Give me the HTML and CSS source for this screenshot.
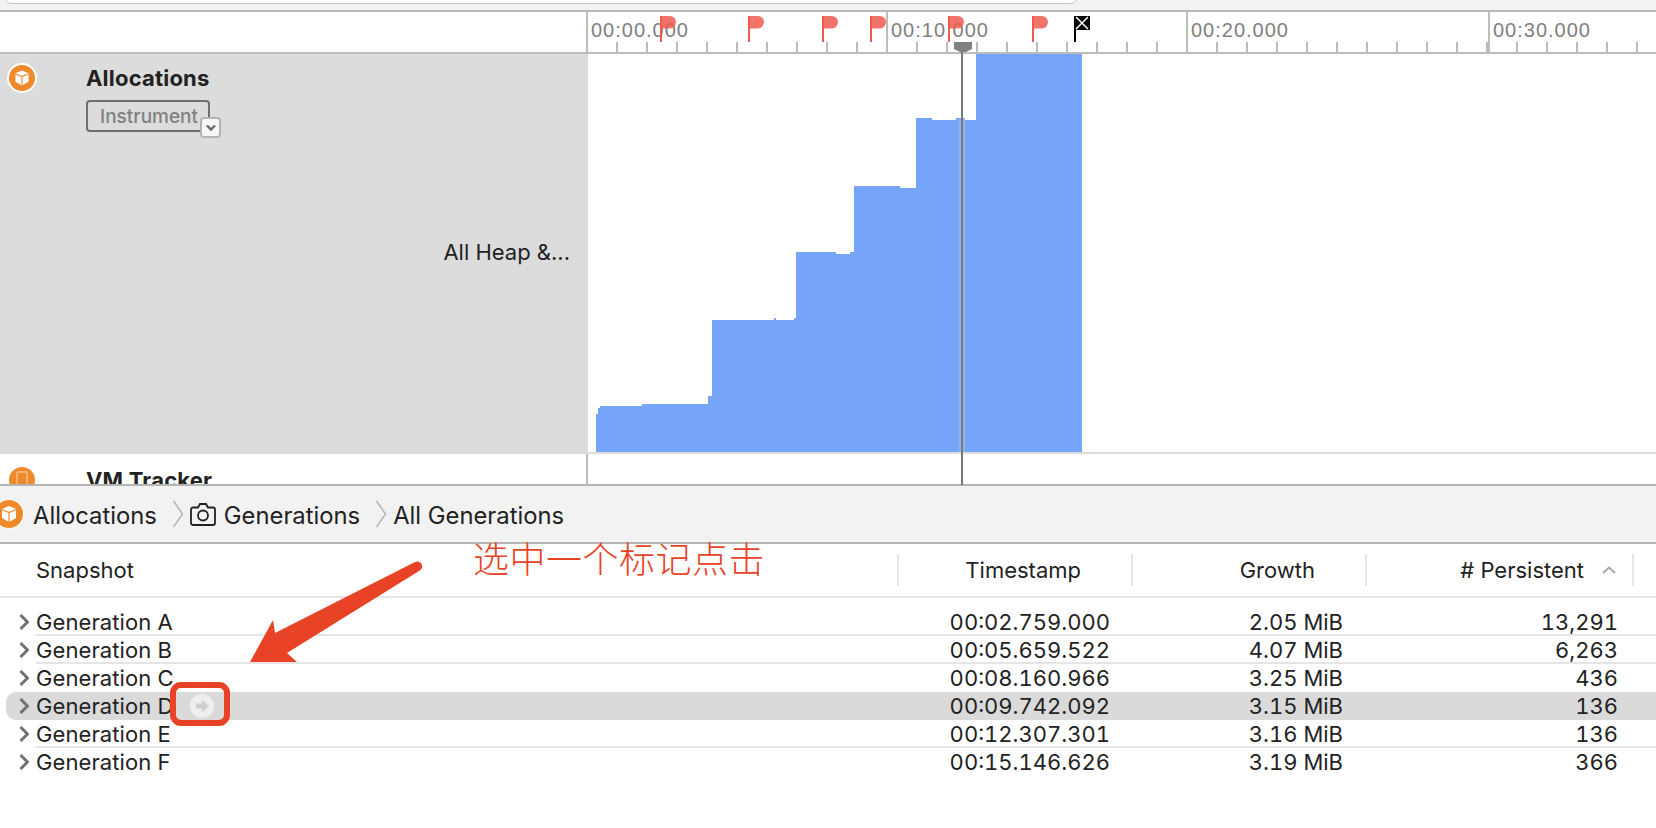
FILE: index.html
```html
<!DOCTYPE html>
<html lang="en">
<head>
    <meta charset="UTF-8">
    <meta name="viewport" content="width=device-width, initial-scale=1.0">
    <title>Allocations</title>
    <link rel="stylesheet" href="styles.css">
</head>
<body>
    <svg width="0" height="0" class="defs">
        <symbol id="box" viewBox="0 0 28 28">
            <circle cx="14" cy="14" r="14" fill="#ee8a2c"/>
            <path d="M14 6l7 3v9l-7 4-7-4V9z" fill="#fff"/>
            <path d="M7 9.500l7 3 7-3M14 12.500V22" fill="none" stroke="#ee8a2c" stroke-width="1.200"/>
        </symbol>
        <symbol id="chevron" viewBox="0 0 10 16">
            <path d="M1.500 1l7 7-7 7" fill="none" stroke="#707070" stroke-width="3"/>
        </symbol>
    </svg>

    <div class="topbar"><div class="search"></div></div>

    <div class="ruler-row">
        <div class="ruler-side"></div>
        <div class="ruler">
            <span class="tick-label">00:00.000</span>
            <span class="tick-label">00:10.000</span>
            <span class="tick-label">00:20.000</span>
            <span class="tick-label">00:30.000</span>
        </div>
    </div>

    <div class="track">
        <div class="track-side">
            <svg class="track-icon" width="30" height="30"><circle cx="15" cy="15" r="15" fill="#fff"/><use href="#box" x="2" y="2" width="26" height="26"/></svg>
            <div class="track-info">
                <div class="track-name">Allocations</div>
                <div class="track-kind">Instrument
                    <span class="kind-menu"><svg width="12" height="8" viewBox="0 0 12 8"><path d="M2 1.500l4 4 4-4" fill="none" stroke="#666" stroke-width="2.400"/></svg></span>
                </div>
            </div>
            <div class="track-filter">All Heap &amp;...</div>
        </div>
        <div class="track-graph">
            <svg class="graph" width="1068" height="398" viewBox="588 54 1068 398">
                <polygon fill="#76a4f9" points="596,452 596,414 598,414 598,408 600,408 600,406 642,406 642,404 708,404 708,396 712,396 712,320 774,320 774,318 776,318 776,320 794,320 794,318 796,318 796,252 836,252 836,254 850,254 850,252 854,252 854,186 900,186 900,188 916,188 916,118 932,118 932,120 956,120 956,118 959,118 959,120 976,120 976,54 1082,54 1082,452"/>
                <rect x="959" y="118" width="6" height="334" fill="#8fb2ee"/>
            </svg>
        </div>
    </div>

    <div class="track track-next">
        <div class="track-side">
            <svg class="track-icon" width="30" height="30"><circle cx="15" cy="15" r="13" fill="#ee8a2c"/><rect x="10" y="7" width="10" height="16" rx="1" fill="none" stroke="#f6c08c" stroke-width="1.400"/></svg>
            <div class="track-info">
                <div class="track-name">VM Tracker</div>
            </div>
        </div>
        <div class="track-graph"></div>
    </div>

    <div class="crumbs">
        <svg class="crumb-box" width="30" height="30"><circle cx="15" cy="15" r="15" fill="#fff"/><use href="#box" x="1" y="1" width="28" height="28"/></svg>
        <span class="crumb">Allocations</span>
        <svg class="crumb-sep" width="12" height="28" viewBox="0 0 12 28"><path d="M1.500 1l9 13-9 13" fill="none" stroke="#b8b8b8" stroke-width="1.600"/></svg>
        <svg class="crumb-camera" width="26" height="23" viewBox="0 0 26 23"><path d="M3 4.500h5l2-3.500h6l2 3.500h5a2 2 0 0 1 2 2V20a2 2 0 0 1-2 2H3a2 2 0 0 1-2-2V6.500a2 2 0 0 1 2-2z" fill="none" stroke="#222" stroke-width="1.800"/><circle cx="13" cy="12.500" r="5" fill="none" stroke="#222" stroke-width="1.800"/></svg>
        <span class="crumb">Generations</span>
        <svg class="crumb-sep" width="12" height="28" viewBox="0 0 12 28"><path d="M1.500 1l9 13-9 13" fill="none" stroke="#b8b8b8" stroke-width="1.600"/></svg>
        <span class="crumb">All Generations</span>
    </div>

    <div class="table-head">
        <div class="col-name">Snapshot</div>
        <div class="col col-time">Timestamp</div>
        <div class="col col-growth">Growth</div>
        <div class="col col-count">
            # Persistent
            <svg class="sort" width="14" height="8" viewBox="0 0 14 8"><path d="M1 7l6-5.500 6 5.500" fill="none" stroke="#a8a8a8" stroke-width="2"/></svg>
        </div>
    </div>

    <div class="table-body">
        <div class="row">
            <svg class="disclosure" width="10" height="16"><use href="#chevron"/></svg>
            <div class="cell-name">Generation A</div>
            <div class="cell cell-time">00:02.759.000</div>
            <div class="cell cell-growth">2.05 MiB</div>
            <div class="cell cell-count">13,291</div>
        </div>
        <div class="row">
            <svg class="disclosure" width="10" height="16"><use href="#chevron"/></svg>
            <div class="cell-name">Generation B</div>
            <div class="cell cell-time">00:05.659.522</div>
            <div class="cell cell-growth">4.07 MiB</div>
            <div class="cell cell-count">6,263</div>
        </div>
        <div class="row row-plain">
            <svg class="disclosure" width="10" height="16"><use href="#chevron"/></svg>
            <div class="cell-name">Generation C</div>
            <div class="cell cell-time">00:08.160.966</div>
            <div class="cell cell-growth">3.25 MiB</div>
            <div class="cell cell-count">436</div>
        </div>
        <div class="row row-plain selected">
            <svg class="disclosure" width="10" height="16"><use href="#chevron"/></svg>
            <div class="cell-name">Generation D</div>
            <div class="cell cell-time">00:09.742.092</div>
            <div class="cell cell-growth">3.15 MiB</div>
            <div class="cell cell-count">136</div>
        </div>
        <div class="row">
            <svg class="disclosure" width="10" height="16"><use href="#chevron"/></svg>
            <div class="cell-name">Generation E</div>
            <div class="cell cell-time">00:12.307.301</div>
            <div class="cell cell-growth">3.16 MiB</div>
            <div class="cell cell-count">136</div>
        </div>
        <div class="row row-plain">
            <svg class="disclosure" width="10" height="16"><use href="#chevron"/></svg>
            <div class="cell-name">Generation F</div>
            <div class="cell cell-time">00:15.146.626</div>
            <div class="cell cell-growth">3.19 MiB</div>
            <div class="cell cell-count">366</div>
        </div>
    </div>

    <!-- flags, playhead and the red annotation sit on top of everything -->
    <svg class="overlay" width="1656" height="828" viewBox="0 0 1656 828">
        <defs>
            <g id="flag">
                <path d="M0 0h2v26H0z" fill="#ee5a50"/>
                <path d="M2 0h8a6 6 0 0 1 6 6 6.500 6.500 0 0 1-6 6.500H2z" fill="#ee5a50" fill-opacity=".85"/>
            </g>
        </defs>
        <use href="#flag" x="660" y="16"/>
        <use href="#flag" x="748" y="16"/>
        <use href="#flag" x="822" y="16"/>
        <use href="#flag" x="870" y="16"/>
        <use href="#flag" x="948" y="16"/>
        <use href="#flag" x="1032" y="16"/>

        <path d="M1074 16h2v26h-2z" fill="#000"/>
        <rect x="1074" y="16" width="16" height="14" fill="#000"/>
        <path d="M1076 17l12 12M1088 17l-12 12" stroke="#fff" stroke-width="1.500"/>

        <path d="M954 42h18v7l-6 3h-6l-6-3z" fill="#808080"/>
        <rect x="961" y="52" width="2" height="433" fill="#777"/>

        <path d="M250 662L273 620L275 633L415 562Q420 560 422 565Q423 569 419 571L287 653L297 662z" fill="#e84326"/>
        <rect x="173" y="685" width="54" height="38" rx="8" fill="none" stroke="#e84326" stroke-width="6"/>
        <circle cx="202" cy="706" r="12" fill="#efefef"/>
        <path d="M196 703.500h6v-4l7 6.500-7 6.500v-4h-6z" fill="#d0d0d0"/>
    </svg>
    <div class="note">选中一个标记点击</div>
</body>
</html>
```

FILE: styles.css
```css
html, body {
    margin: 0;
    padding: 0;
}
body {
    position: relative;
    width: 1656px;
    height: 828px;
    overflow: hidden;
    background-color: #fff;
    color: #222;
    font-family: Inter, "Noto Sans", sans-serif;
    font-size: 22px;
}
.defs {
    position: absolute;
}
.topbar {
    height: 10px;
    padding-left: 5px;
    overflow: hidden;
    background-color: #f2f2f2;
    border-bottom: 2px solid #b8b8b8;
}
.search {
    width: 1070px;
    height: 10px;
    margin-top: -8px;
    background-color: #fff;
    border: 1px solid #c4c4c4;
    border-radius: 6px;
}

/* timeline ruler */
.ruler-row {
    display: flex;
    height: 40px;
    border-bottom: 2px solid #bcbcbc;
}
.ruler-side {
    flex: none;
    width: 586px;
}
.ruler {
    display: flex;
    flex: 1;
    overflow: hidden;
    background-image: repeating-linear-gradient(to right, #bcbcbc 0, #bcbcbc 2px, transparent 2px, transparent 30px);
    background-position: 0 30px;
    background-repeat: repeat-x;
    background-size: 100% 10px;
}
.tick-label {
    flex: none;
    box-sizing: border-box;
    width: 300px;
    height: 40px;
    padding: 6px 0 0 3px;
    border-left: 2px solid #bcbcbc;
    color: #808080;
    font-family: "Liberation Sans", sans-serif;
    font-size: 20px;
    letter-spacing: 1px;
    line-height: 24px;
}
.tick-label:nth-child(3) {
    width: 302px;
}

/* tracks */
.track {
    display: flex;
    height: 398px;
    border-bottom: 2px solid #dcdcdc;
}
.track-side {
    display: flex;
    position: relative;
    flex: none;
    width: 588px;
    box-sizing: border-box;
    padding: 9px 0 0 7px;
    background-color: #dcdcdc;
}
.track-icon {
    flex: none;
}
.track-info {
    margin-left: 49px;
}
.track-name {
    font-size: 22px;
    font-weight: 700;
    letter-spacing: .2px;
    line-height: 30px;
}
.track-kind {
    position: relative;
    box-sizing: border-box;
    width: 124px;
    height: 32px;
    margin-top: 7px;
    padding-left: 12px;
    border: 2px solid #6e6e6e;
    border-radius: 4px;
    color: #808080;
    font-size: 19px;
    font-weight: 500;
    line-height: 29px;
}
.kind-menu {
    display: flex;
    position: absolute;
    left: 112px;
    top: 15px;
    align-items: center;
    justify-content: center;
    box-sizing: border-box;
    width: 21px;
    height: 21px;
    background-color: #f7f7f7;
    border: 2px solid #b4b4b4;
    border-radius: 4px;
}
.track-filter {
    margin-left: auto;
    margin-right: 18px;
    padding-top: 175px;
    font-size: 22px;
    line-height: 28px;
}
.track-graph {
    flex: 1;
}
.graph {
    display: block;
}
.track-next {
    height: 30px;
    overflow: hidden;
    border-bottom: 2px solid #b5b5b5;
}
.track-next .track-side {
    width: 588px;
    padding-top: 11px;
    background-color: #fff;
    border-right: 2px solid #bcbcbc;
}

/* breadcrumb bar */
.crumbs {
    display: flex;
    align-items: center;
    height: 56px;
    background-color: #f2f2f2;
    border-bottom: 2px solid #b5b5b5;
}
.crumb-box {
    flex: none;
    margin-left: -6px;
    margin-right: 9px;
}
.crumb {
    position: relative;
    top: 1px;
    font-size: 23.800px;
}
.crumb-sep {
    flex: none;
    margin: 0 6px 0 15px;
}
.crumb-camera {
    flex: none;
    margin: 0 8px 0 0;
}

/* table */
.table-head {
    display: flex;
    align-items: center;
    height: 52px;
    border-bottom: 2px solid #e5e5e5;
}
.col-name {
    width: 861px;
    padding-left: 36px;
}
.col {
    display: flex;
    align-items: center;
    justify-content: flex-end;
    box-sizing: border-box;
    width: 234px;
    height: 32px;
    border-left: 2px solid #e5e5e5;
}
.col-time {
    padding-right: 50px;
}
.col-growth {
    padding-right: 50px;
}
.col-count {
    width: 269px;
    padding-right: 16px;
    border-right: 2px solid #e5e5e5;
}
.sort {
    margin-left: 18px;
}
.table-body {
    padding-top: 10px;
    font-variant-numeric: tabular-nums;
}
.row {
    display: flex;
    position: relative;
    align-items: center;
    height: 28px;
    padding-left: 36px;
}
.row::after {
    content: "";
    position: absolute;
    left: 36px;
    right: 0;
    bottom: 0;
    height: 2px;
    background-color: #e5e5e5;
}
.row-plain::after {
    display: none;
}
.selected {
    margin-left: 6px;
    padding-left: 30px;
    background-color: #dadada;
    border-radius: 10px 0 0 10px;
}
.disclosure {
    position: absolute;
    left: 19px;
    top: 6px;
}
.selected .disclosure {
    left: 13px;
}
.cell-name {
    width: 824px;
    letter-spacing: .1px;
}
.cell {
    box-sizing: border-box;
    text-align: right;
}
.cell-time {
    width: 250px;
}
.cell-growth {
    width: 233px;
}
.cell-count {
    width: 275px;
}
.overlay {
    position: absolute;
    left: 0;
    top: 0;
    pointer-events: none;
}
.note {
    position: absolute;
    left: 473px;
    top: 531px;
    color: #e84326;
    font-family: "Noto Sans CJK SC", sans-serif;
    font-size: 36px;
    font-weight: 300;
    letter-spacing: .5px;
    line-height: 52px;
}
```
